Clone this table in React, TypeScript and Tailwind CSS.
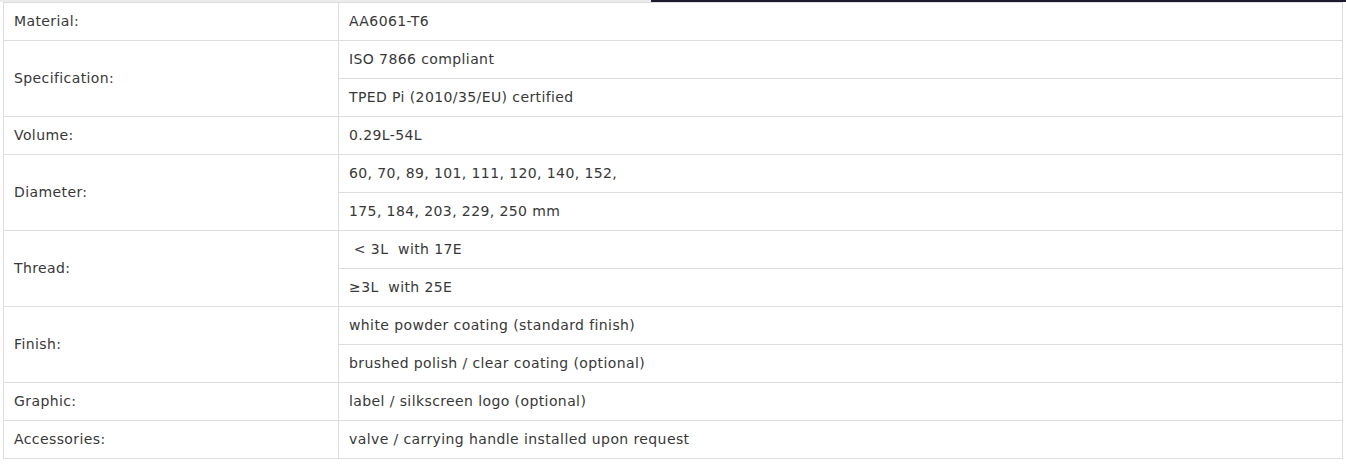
import React from "react";

type Spec = { label: string; values: string[] };

const specs: Spec[] = [
  { label: "Material:", values: ["AA6061-T6"] },
  { label: "Specification:", values: ["ISO 7866 compliant", "TPED Pi (2010/35/EU) certified"] },
  { label: "Volume:", values: ["0.29L-54L"] },
  { label: "Diameter:", values: ["60, 70, 89, 101, 111, 120, 140, 152,", "175, 184, 203, 229, 250 mm"] },
  { label: "Thread:", values: [" < 3L  with 17E", "≥3L  with 25E"] },
  { label: "Finish:", values: ["white powder coating (standard finish)", "brushed polish / clear coating (optional)"] },
  { label: "Graphic:", values: ["label / silkscreen logo (optional)"] },
  { label: "Accessories:", values: ["valve / carrying handle installed upon request"] },
];

export default function App() {
  return (
    <div className="w-[1346px] h-[466px] bg-white font-['DejaVu_Sans',sans-serif] text-[14px] tracking-[0.4px] text-[#383838]">
      <div className="flex h-[2px]">
        <div className="w-[651px] bg-[#ececec]" />
        <div className="flex-1 bg-[#1c1b2e]" />
      </div>
      <div className="pl-[3px]">
        <table className="w-[1340px] border-collapse table-fixed">
          <colgroup>
            <col className="w-[335px]" />
            <col />
          </colgroup>
          <tbody>
            {specs.map((spec) =>
              spec.values.map((value, i) => (
                <tr key={spec.label + i}>
                  {i === 0 && (
                    <td
                      rowSpan={spec.values.length}
                      className="border border-[#dddddd] px-[10px] align-middle"
                    >
                      {spec.label}
                    </td>
                  )}
                  <td className="h-[38px] border border-[#dddddd] px-[10px] whitespace-pre">
                    {value}
                  </td>
                </tr>
              ))
            )}
          </tbody>
        </table>
      </div>
    </div>
  );
}
